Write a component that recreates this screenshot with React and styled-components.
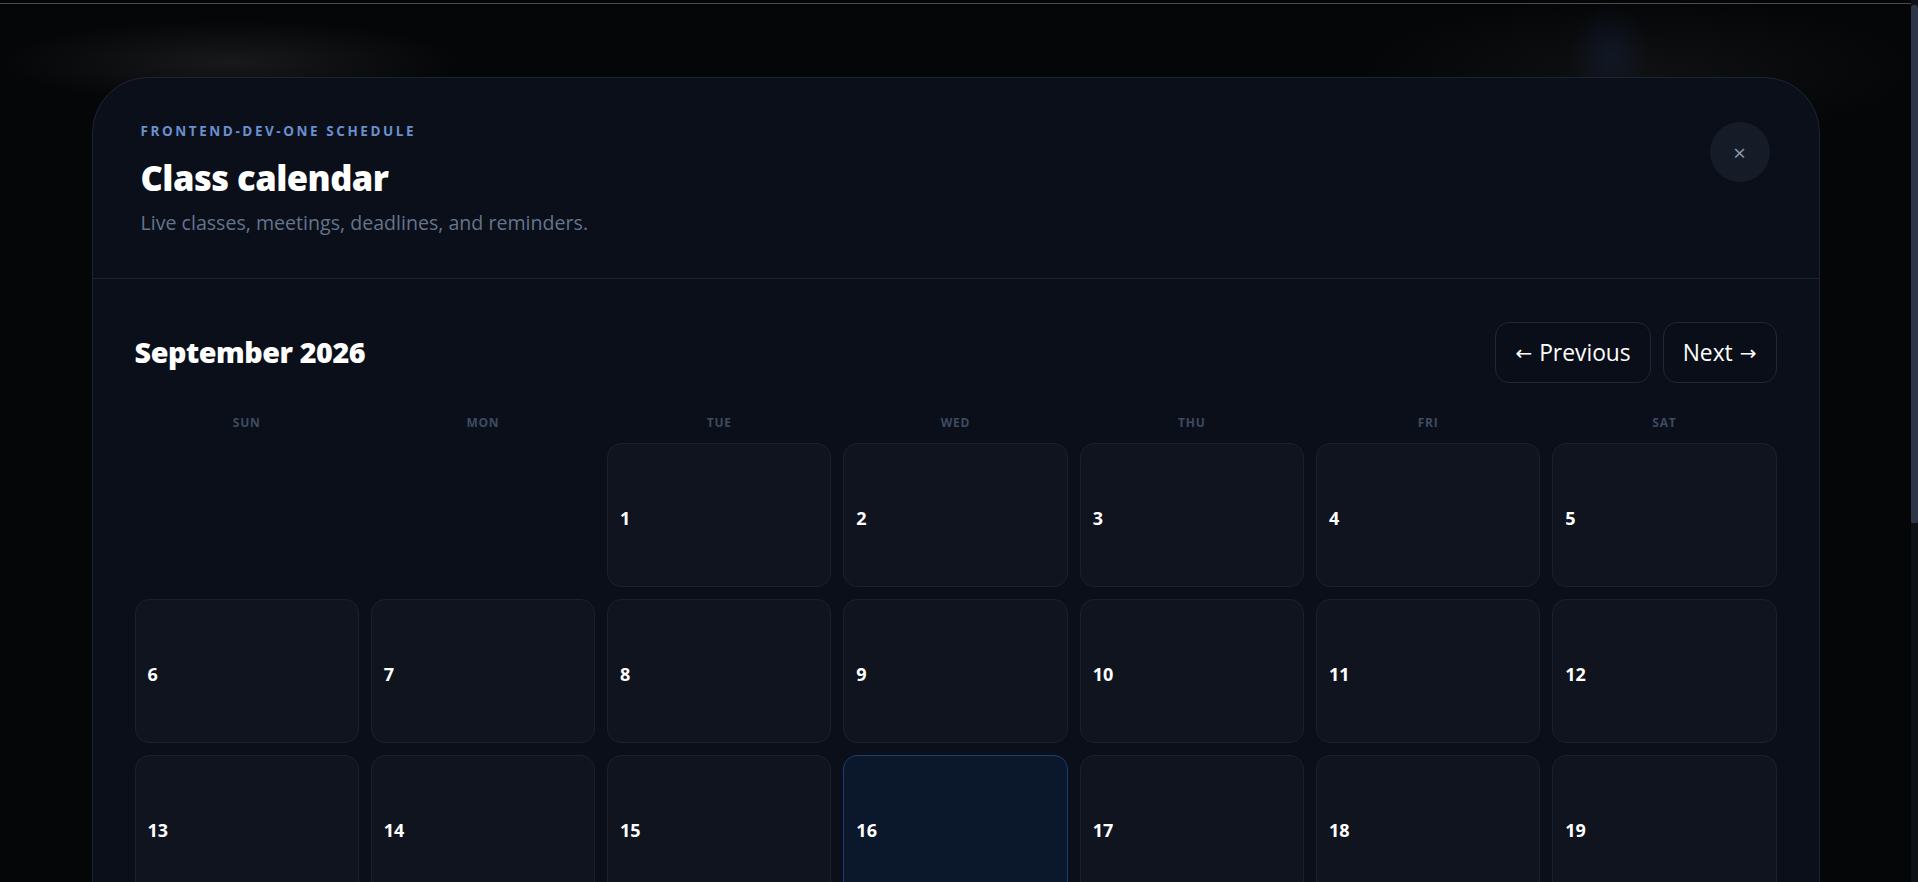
import React from "react";
import styled, { createGlobalStyle } from "styled-components";

const Global = createGlobalStyle`
  html, body { margin: 0; padding: 0; background: #050608; overflow: hidden; }
  body { font-family: "Open Sans", "Noto Sans", Arial, sans-serif; color: #fff; }
  * { box-sizing: border-box; }
`;

const Backdrop = styled.div`
  position: fixed;
  inset: 0;
  background:
    radial-gradient(ellipse 230px 42px at 230px 62px, rgba(60, 60, 60, 0.35), transparent),
    radial-gradient(ellipse 280px 70px at 1640px 70px, rgba(40, 40, 40, 0.3), transparent),
    radial-gradient(ellipse 40px 50px at 1610px 55px, rgba(20, 40, 90, 0.35), transparent),
    #050608;
  z-index: 0;
`;

const TopLine = styled.div`
  position: fixed;
  top: 3px;
  left: 0;
  right: 7px;
  height: 1px;
  background: #4a4a4a;
  z-index: 1;
`;

const ScrollTrack = styled.div`
  position: fixed;
  top: 0;
  right: 0;
  bottom: 0;
  width: 7px;
  background: #0e1117;
  z-index: 3;
`;

const ScrollThumb = styled.div`
  position: absolute;
  top: 5px;
  left: 0;
  right: 0;
  height: 518px;
  background: #2b3749;
  border-radius: 3px 3px 1px 1px;
`;

const Overlay = styled.div`
  position: fixed;
  inset: 0 7px 0 0;
  z-index: 2;
  overflow: hidden;
`;

const Stage = styled.div`
  padding: 77px 0 225px;
  display: flex;
  justify-content: center;
`;

const Modal = styled.section`
  width: 1728px;
  flex-shrink: 0;
  background: #0a0f1a;
  border: 1px solid #1c2433;
  border-radius: 56px;
  overflow: hidden;
`;

const Header = styled.header`
  display: flex;
  justify-content: space-between;
  align-items: flex-start;
  padding: 44px 49px 41.5px 48px;
  border-bottom: 1px solid #1b2230;
`;

const TitleBlock = styled.div`
  display: flex;
  flex-direction: column;
`;

const Eyebrow = styled.div`
  font-size: 13.5px;
  line-height: 18px;
  font-weight: 700;
  letter-spacing: 0.19em;
  color: #6a8fcf;
  text-transform: uppercase;
  margin-bottom: 17px;
`;

const Title = styled.h1`
  margin: 0;
  font-size: 34.5px;
  line-height: 42px;
  font-weight: 800;
  color: #fff;
  letter-spacing: -0.015em;
`;

const Subtitle = styled.p`
  margin: 10px 0 0;
  font-size: 19.6px;
  line-height: 27px;
  color: #64748b;
`;

const CloseButton = styled.button`
  width: 60px;
  height: 60px;
  border-radius: 50%;
  border: none;
  background: #151c28;
  color: #8b98ab;
  font-size: 22px;
  line-height: 1;
  display: flex;
  align-items: center;
  justify-content: center;
  font-family: inherit;
  cursor: pointer;
  padding: 0;
`;

const Body = styled.div`
  padding: 43px 42px 42px 42px;
`;

const NavRow = styled.div`
  display: flex;
  justify-content: space-between;
  align-items: center;
  margin-bottom: 32px;
`;

const Month = styled.h2`
  margin: 0;
  font-size: 28.7px;
  line-height: 38px;
  font-weight: 800;
  color: #fff;
  letter-spacing: -0.015em;
`;

const NavButtons = styled.div`
  display: flex;
  gap: 12px;
`;

const NavButton = styled.button`
  height: 61px;
  padding: 0 19px;
  border-radius: 14px;
  border: 1px solid #1f2837;
  background: #090e18;
  color: #fff;
  font-family: inherit;
  font-size: 22.8px;
  display: flex;
  align-items: center;
  gap: 7px;
  cursor: pointer;
`;

const Arrow = styled.span`
  font-family: "DejaVu Sans", sans-serif;
  font-size: 20px;
  line-height: 1;
  position: relative;
  top: 1px;
`;

const Grid = styled.div`
  display: grid;
  grid-template-columns: repeat(7, 1fr);
  column-gap: 12px;
  row-gap: 12px;
`;

const Weekday = styled.div`
  text-align: center;
  font-size: 12px;
  line-height: 16px;
  font-weight: 700;
  letter-spacing: 0.06em;
  color: #3e4b60;
`;

const DayCell = styled.div`
  height: 144px;
  border-radius: 14px;
  border: 1px solid ${(p) => (p.$today ? "#1d3c70" : "#1a202d")};
  background: ${(p) => (p.$today ? "#0b172a" : "#0f141f")};
  display: flex;
  flex-direction: column;
  justify-content: center;
  padding: 7px 12px 0;
`;

const EmptyCell = styled.div`
  height: 144px;
`;

const DayNumber = styled.span`
  font-size: 18px;
  font-weight: 700;
  color: #fff;
  line-height: 22px;
`;

const weekdays = ["SUN", "MON", "TUE", "WED", "THU", "FRI", "SAT"];

export default function App() {
  const firstDay = 2;
  const days = 30;
  const cells = [];
  for (let i = 0; i < firstDay; i++) cells.push(null);
  for (let d = 1; d <= days; d++) cells.push(d);

  return (
    <>
      <Global />
      <Backdrop />
      <TopLine />
      <Overlay>
        <Stage>
          <Modal>
            <Header>
              <TitleBlock>
                <Eyebrow>Frontend-dev-one schedule</Eyebrow>
                <Title>Class calendar</Title>
                <Subtitle>Live classes, meetings, deadlines, and reminders.</Subtitle>
              </TitleBlock>
              <CloseButton aria-label="Close">×</CloseButton>
            </Header>
            <Body>
              <NavRow>
                <Month>September 2026</Month>
                <NavButtons>
                  <NavButton>
                    <Arrow>←</Arrow>Previous
                  </NavButton>
                  <NavButton>
                    Next<Arrow>→</Arrow>
                  </NavButton>
                </NavButtons>
              </NavRow>
              <Grid>
                {weekdays.map((w) => (
                  <Weekday key={w}>{w}</Weekday>
                ))}
                {cells.map((d, i) =>
                  d === null ? (
                    <EmptyCell key={"e" + i} />
                  ) : (
                    <DayCell key={d} $today={d === 16}>
                      <DayNumber>{d}</DayNumber>
                    </DayCell>
                  )
                )}
              </Grid>
            </Body>
          </Modal>
        </Stage>
      </Overlay>
      <ScrollTrack>
        <ScrollThumb />
      </ScrollTrack>
    </>
  );
}
